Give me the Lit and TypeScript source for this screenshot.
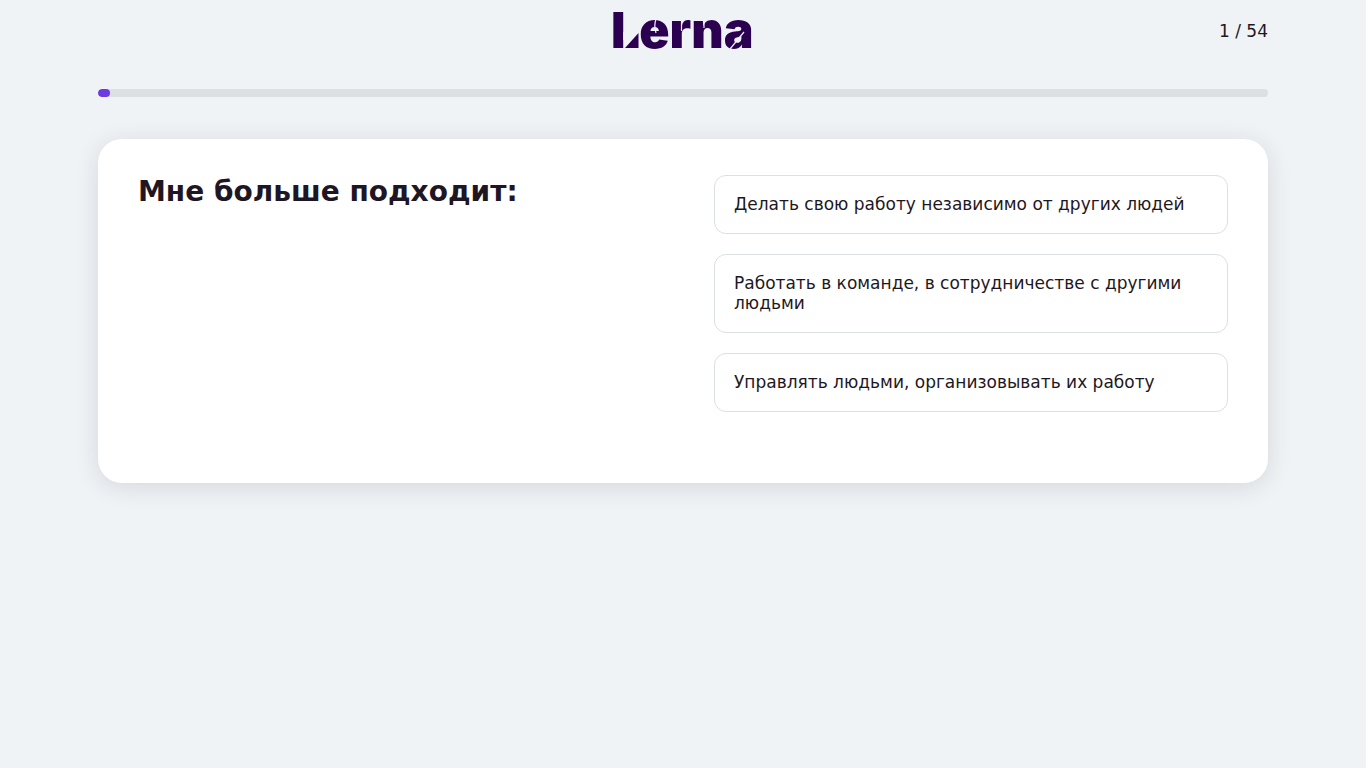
import { LitElement, html, css } from "lit";
import { customElement, property, state } from "lit/decorators.js";

@customElement("lerna-logo")
class LernaLogo extends LitElement {
  static styles = css`
    :host {
      display: block;
    }
    .logo {
      display: block;
      width: 140px;
      height: 38px;
      overflow: visible;
    }
    .word {
      font-family: Inter, "Liberation Sans", sans-serif;
      font-size: 50px;
      font-weight: 900;
      fill: #2b0050;
    }
    .keep {
      fill: #fff;
    }
    .cut {
      fill: #000;
    }
    .slit {
      fill: none;
      stroke: #000;
      stroke-width: 1.2;
    }
    .accent {
      fill: #2b0050;
    }
  `;

  render() {
    return html`
      <svg class="logo" viewBox="0 0 140 38" role="img" aria-label="Lerna">
        <mask id="stencil" maskUnits="userSpaceOnUse" x="-4" y="-4" width="152" height="46">
          <rect class="keep" x="-4" y="-4" width="152" height="46" />
          <!-- the foot of the L, replaced by a wedge -->
          <rect class="cut" x="10.2" y="20" width="16.8" height="18" />
          <!-- the eye of the e -->
          <path class="slit" d="M43 7C41.500 11 41.500 16 43 21" />
          <!-- stems of r and n part from their arms -->
          <path class="slit" d="M68.500 19V6M91 16V6" />
          <!-- the bowl of the a -->
          <path class="slit" d="M117 37L131 20" />
        </mask>
        <text class="word" x="-2" y="36" mask="url(#stencil)">Lerna</text>
        <path class="accent" d="M12 36L25.500 21V36Z" />
      </svg>
    `;
  }
}

@customElement("app-root")
class AppRoot extends LitElement {
  @property({ type: Number }) step = 1;
  @property({ type: Number }) total = 54;
  @property({ type: Number }) percent = 1;
  @state() private selected = -1;

  private question = "Мне больше подходит:";
  private options = [
    "Делать свою работу независимо от других людей",
    "Работать в команде, в сотрудничестве с другими людьми",
    "Управлять людьми, организовывать их работу",
  ];

  static styles = css`
    :host {
      display: block;
      box-sizing: border-box;
      min-height: 100vh;
      background: #eff3f6;
      color: #1e1723;
      font-family: "DejaVu Sans", Verdana, sans-serif;
      font-size: 17px;
      line-height: 20px;
    }
    .container {
      box-sizing: border-box;
      max-width: 1210px;
      margin: 0 auto;
      padding: 0 20px;
    }
    .header {
      display: grid;
      grid-template-columns: 1fr auto 1fr;
      align-items: center;
      padding: 12px 0;
    }
    .logo {
      grid-column: 2;
    }
    .counter {
      justify-self: end;
    }
    .track {
      height: 8px;
      margin-top: 27px;
      border-radius: 4px;
      background: #dce0e3;
      overflow: hidden;
    }
    .fill {
      height: 8px;
      border-radius: 4px;
      background: #6f3be0;
    }
    .card {
      display: grid;
      grid-template-columns: 1fr 1fr;
      gap: 62px;
      margin-top: 42px;
      padding: 36px 40px 71px;
      border-radius: 24px;
      background: #fff;
      box-shadow: 0 4px 24px rgba(30, 23, 35, 0.12);
    }
    .question {
      margin: 0;
      font-size: 28px;
      line-height: 34px;
      font-weight: 700;
    }
    .options {
      display: flex;
      flex-direction: column;
      gap: 20px;
    }
    .option {
      padding: 18px 19px 19px;
      border: 1px solid #dce0e3;
      border-radius: 12px;
      background: #fff;
      color: inherit;
      font: inherit;
      text-align: left;
      cursor: pointer;
    }
    .option:hover,
    .option[aria-pressed="true"] {
      border-color: #6f3be0;
    }
  `;

  render() {
    return html`
      <div class="container">
        <header class="header">
          <lerna-logo class="logo"></lerna-logo>
          <div class="counter">${this.step} / ${this.total}</div>
        </header>
        <div
          class="track"
          role="progressbar"
          aria-label="Прогресс"
          aria-valuenow=${this.percent}
          aria-valuemin="0"
          aria-valuemax="100"
        >
          <div class="fill" style="width: ${this.percent}%"></div>
        </div>
        <main class="card">
          <h1 class="question">${this.question}</h1>
          <div class="options">
            ${this.options.map(
              (text, i) => html`
                <button
                  class="option"
                  type="button"
                  aria-pressed=${this.selected === i ? "true" : "false"}
                  @click=${() => (this.selected = i)}
                >
                  ${text}
                </button>
              `
            )}
          </div>
        </main>
      </div>
    `;
  }
}
